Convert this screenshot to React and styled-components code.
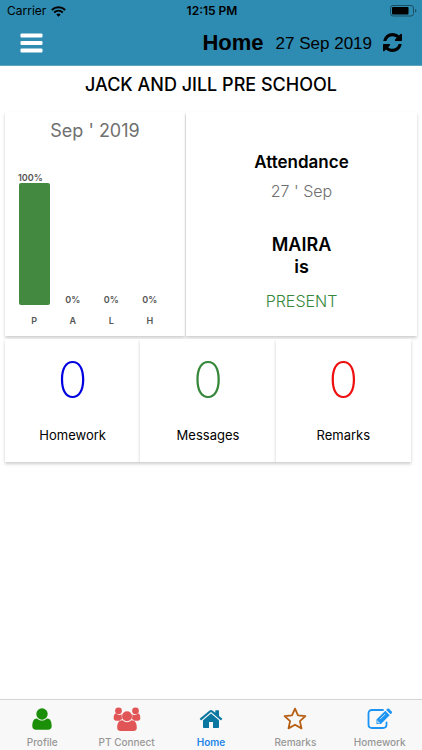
import React from "react";
import styled, { createGlobalStyle } from "styled-components";

const GlobalStyle = createGlobalStyle`
  * {
    box-sizing: border-box;
  }

  body {
    margin: 0;
    background: #fff;
    color: #000;
    font-family: Inter, "Liberation Sans", sans-serif;
  }

  button {
    margin: 0;
    padding: 0;
    border: 0;
    background: none;
    color: inherit;
    font: inherit;
    cursor: pointer;
  }
`;

const Page = styled.div`
  display: flex;
  flex-direction: column;
  min-height: 100vh;
`;

const Header = styled.header`
  background: #2e8bb1;
  border-bottom: 1px solid #5fa5c2;
`;

const StatusBar = styled.div`
  display: grid;
  grid-template-columns: 1fr auto 1fr;
  align-items: center;
  height: 22px;
  padding: 0 5px 0 7px;
  font-size: 12px;
  line-height: 22px;
`;

const Carrier = styled.span`
  display: flex;
  align-items: center;
  gap: 5px;
`;

const Time = styled.span`
  font-weight: 600;
`;

const Battery = styled.svg`
  justify-self: end;
`;

const Toolbar = styled.div`
  display: flex;
  align-items: center;
  height: 43px;
  padding: 0 20px 2px;
  font-family: "Liberation Sans", Arial, sans-serif;
`;

const IconButton = styled.button`
  display: flex;
  margin-left: ${(props) => (props.$end ? "11px" : "0")};
`;

const Title = styled.h1`
  margin: 0 0 0 auto;
  font-size: 22px;
  line-height: 40px;
`;

const Today = styled.span`
  margin-left: 12px;
  padding-top: 2px;
  font-size: 17px;
  line-height: 40px;
`;

const School = styled.h2`
  margin: 0;
  padding: 8px 0 16px;
  font-size: 18px;
  font-weight: 500;
  line-height: 22px;
  text-align: center;
`;

const Content = styled.main`
  flex: 1;
  padding: 0 5px;
`;

const Row = styled.div`
  display: grid;
  grid-template-columns: ${(props) => props.$columns};
  gap: ${(props) => props.$gap || "0"};
  margin: 0 ${(props) => props.$inset || "0"} 3px 0;
`;

const Card = styled.section`
  display: flex;
  flex-direction: column;
  align-items: center;
  background: #fff;
  box-shadow: 0 2px 3px rgba(0, 0, 0, 0.2);
`;

const ChartCard = styled(Card)`
  padding: 7px 16px 10px 10px;
`;

const Month = styled.h3`
  margin: 0 0 30px 6px;
  color: #707070;
  font-size: 18px;
  font-weight: 400;
  line-height: 24px;
`;

const Chart = styled.div`
  display: grid;
  grid-template-columns: repeat(4, 1fr);
  width: 100%;
  color: #555;
  font-size: 9px;
  font-weight: 600;
  line-height: 10px;
`;

const Column = styled.div`
  display: flex;
  flex-direction: column;
  align-items: center;
  justify-content: flex-end;
  height: 153px;
`;

const Percent = styled.span`
  align-self: ${(props) => (props.$wide ? "flex-start" : "center")};
  padding-left: ${(props) => (props.$wide ? "3px" : "0")};
`;

const Bar = styled.div`
  width: 31px;
  border-radius: 2px;
  background: #43893f;
`;

const Letter = styled.span`
  margin-top: 11px;
`;

const StatusCard = styled(Card)`
  padding-top: 39px;
`;

const Line = styled.p`
  margin: 0;
  color: ${(props) => props.$color || "#000"};
  font-size: ${(props) => props.$size || "16px"};
  font-weight: ${(props) => props.$weight || 600};
  line-height: 22px;
`;

const Spacer = styled.div`
  height: ${(props) => props.$height};
`;

const CountCard = styled(Card)`
  padding: 16px 0 17px;
`;

const Count = styled.strong`
  color: ${(props) => props.$color};
  font-size: 50px;
  font-weight: 200;
  line-height: 50px;
`;

const CountLabel = styled.span`
  margin-top: 20px;
  font-size: 13px;
  line-height: 20px;
`;

const Tabs = styled.nav`
  display: grid;
  grid-template-columns: repeat(5, 1fr);
  height: 51px;
  border-top: 1px solid #d4d4d4;
  background: #f8f8f8;
`;

const Tab = styled.button`
  && {
    display: flex;
    flex-direction: column;
    align-items: center;
    padding-top: 7px;
    color: ${(props) => (props.$active ? "#2385e8" : "#979797")};
    font-size: 10px;
    font-weight: ${(props) => (props.$active ? 600 : 500)};
    line-height: 14px;
  }
`;

const TabIcon = styled.svg`
  height: 24px;
  margin-bottom: 4px;
  fill: currentColor;
  color: ${(props) => props.$color};
`;

const bars = [
  { letter: "P", value: 100 },
  { letter: "A", value: 0 },
  { letter: "L", value: 0 },
  { letter: "H", value: 0 },
];

const counts = [
  { label: "Homework", value: 0, color: "#0000e0" },
  { label: "Messages", value: 0, color: "#36873a" },
  { label: "Remarks", value: 0, color: "#ee1010" },
];

const tabs = [
  {
    label: "Profile",
    color: "#1c8f08",
    width: 24,
    icon: (
      <>
        <circle cx="12" cy="7" r="5.7" />
        <path d="M7 11.5C3.5 11.5 2.3 15 2.3 19.2C2.3 21.5 3.8 22.7 6 22.7H18C20.2 22.7 21.7 21.5 21.7 19.2C21.7 15 20.5 11.5 17 11.5C15.8 12.7 14 13.6 12 13.6C10 13.6 8.2 12.7 7 11.5Z" />
      </>
    ),
  },
  {
    label: "PT Connect",
    color: "#e25557",
    width: 28,
    icon: (
      <>
        <circle cx="5.5" cy="3.8" r="3.4" />
        <circle cx="22.5" cy="3.8" r="3.4" />
        <path d="M3 6.4C1 6.4.7 9 .7 11.2C.7 12.8 1.7 13.7 3.2 13.7H6.7C7.5 12.7 8.5 12.2 9.5 12.1C8.6 10.8 8.4 9.1 8.9 7.5C6.6 8.5 4.4 7.7 3 6.4Z" />
        <path d="M25 6.4C27 6.4 27.3 9 27.3 11.2C27.3 12.8 26.3 13.7 24.8 13.7H21.3C20.5 12.7 19.5 12.2 18.5 12.1C19.4 10.8 19.6 9.1 19.1 7.5C21.4 8.5 23.6 7.7 25 6.4Z" />
        <circle cx="14" cy="9.2" r="5" />
        <path d="M9.6 13.2C5.5 13.2 4.2 16.5 4.2 20.8C4.2 23 5.6 24 7.6 24H20.4C22.4 24 23.8 23 23.8 20.8C23.8 16.5 22.5 13.2 18.4 13.2C15.8 15.8 12.2 15.8 9.6 13.2Z" />
      </>
    ),
  },
  {
    label: "Home",
    color: "#0b77a0",
    width: 24,
    active: true,
    icon: (
      <>
        <path d="M12 6.6L20 13.2V20.2C20 20.7 19.7 21 19.2 21H14V15H10V21H4.8C4.3 21 4 20.7 4 20.2V13.2Z" />
        <path d="M10.6 3.4C11.4 2.7 12.6 2.7 13.4 3.4L16.3 5.8V3.7C16.3 3.4 16.5 3.2 16.8 3.2H19.5C19.8 3.2 20 3.4 20 3.7V8.9L23.1 11.5C23.3 11.7 23.3 12 23.1 12.2L22.3 13.1C22.1 13.3 21.9 13.3 21.7 13.2L12 5.1L2.3 13.2C2.1 13.3 1.9 13.3 1.7 13.1L.9 12.2C.7 12 .7 11.7.9 11.5Z" />
      </>
    ),
  },
  {
    label: "Remarks",
    color: "#b65e12",
    width: 24,
    icon: (
      <path
        d="M12 1.6L15 8.4L22.4 9.2L16.9 14.1L18.5 21.4L12 17.7L5.5 21.4L7.1 14.1L1.6 9.2L9 8.4Z"
        fill="none"
        stroke="currentColor"
        strokeWidth="1.8"
        strokeLinejoin="round"
      />
    ),
  },
  {
    label: "Homework",
    color: "#1b94f4",
    width: 26,
    icon: (
      <>
        <path
          d="M16 3H5Q1.5 3 1.5 6.5V17.5Q1.5 21 5 21H16Q19.5 21 19.5 17.5V15.5"
          fill="none"
          stroke="currentColor"
          strokeWidth="1.8"
          strokeLinecap="round"
        />
        <path d="M9.5 12.6L18.3 3.8L22.7 8.2L13.9 17H9.5Z" />
        <path d="M19.2 2.9L20.3 1.8Q21.2 1.1 22.1 1.8L24.7 4.4Q25.4 5.3 24.7 6.2L23.6 7.3Z" />
        <path d="M13 12.2L18.2 7M10.8 13.6V15.8H13" fill="none" stroke="#f8f8f8" strokeWidth="0.8" />
      </>
    ),
  },
];

export default function App() {
  return (
    <Page>
      <GlobalStyle />
      <Header>
        <StatusBar>
          <Carrier>
            Carrier
            <svg width="15" height="11" viewBox="0 0 15 11" fill="none" stroke="#000" strokeWidth="1.9">
              <path d="M.8 4C4.5.3 10.5.3 14.2 4M3.2 6.5C5.7 4.2 9.3 4.2 11.8 6.5" />
              <path d="M5.3 8.4Q7.5 6.7 9.7 8.4L7.5 10.7Z" fill="#000" stroke="none" />
            </svg>
          </Carrier>
          <Time>12:15 PM</Time>
          <Battery width="27" height="12" viewBox="0 0 27 12">
            <rect x=".5" y=".5" width="23" height="10.5" rx="2.5" fill="none" stroke="#1a4f65" />
            <rect x="2" y="2" width="16.5" height="7.5" rx="1" />
            <path d="M25 4Q26.5 4.5 26.5 5.8T25 7.6Z" fill="#1a4f65" />
          </Battery>
        </StatusBar>
        <Toolbar>
          <IconButton aria-label="Menu">
            <svg width="23" height="20" viewBox="0 0 23 20" fill="#fff">
              <rect x="0.5" y="0.5" width="22" height="4" rx="1" />
              <rect x="0.5" y="8" width="22" height="4" rx="1" />
              <rect x="0.5" y="15.5" width="22" height="4" rx="1" />
            </svg>
          </IconButton>
          <Title>Home</Title>
          <Today>27 Sep 2019</Today>
          <IconButton $end aria-label="Refresh">
            <svg width="19" height="19" viewBox="0 0 1536 1536">
              <path d="M1511 928q0 5-1 7-64 268-268 434.500T764 1536q-146 0-282.500-55T238 1324l-129 129q-19 19-45 19t-45-19-19-45V960q0-26 19-45t45-19h448q26 0 45 19t19 45-19 45l-137 137q71 66 161 102t187 36q134 0 250-65t186-179q11-17 53-117 8-23 30-23h192q13 0 22.500 9.500t9.500 22.500zM1536 128v448q0 26-19 45t-45 19h-448q-26 0-45-19t-19-45 19-45l138-138Q969 256 768 256q-134 0-250 65T332 500q-11 17-53 117-8 23-30 23H50q-13 0-22.500-9.500T18 608v-7q65-268 270-434.500T768 0q146 0 284 55.500T1297 212l130-129q19-19 45-19t45 19 19 45z" />
            </svg>
          </IconButton>
        </Toolbar>
      </Header>

      <Content>
        <School>JACK AND JILL PRE SCHOOL</School>
        <Row $columns="180fr 231fr" $gap="1px">
          <ChartCard>
            <Month>Sep ' 2019</Month>
            <Chart>
              {bars.map((bar) => (
                <Column key={bar.letter}>
                  <Percent $wide={bar.value === 100}>{bar.value}%</Percent>
                  <Bar style={{ height: `${bar.value * 1.22}px` }} />
                  <Letter>{bar.letter}</Letter>
                </Column>
              ))}
            </Chart>
          </ChartCard>
          <StatusCard>
            <Line $size="17px">Attendance</Line>
            <Spacer $height="7px" />
            <Line $color="#707070" $weight={300}>27 ' Sep</Line>
            <Spacer $height="32px" />
            <Line $size="18px">MAIRA</Line>
            <Line $size="18px">is</Line>
            <Spacer $height="12px" />
            <Line $color="#36873a" $weight={300}>PRESENT</Line>
          </StatusCard>
        </Row>
        <Row $columns="repeat(3, 1fr)" $inset="6px">
          {counts.map((item) => (
            <CountCard key={item.label}>
              <Count $color={item.color}>{item.value}</Count>
              <CountLabel>{item.label}</CountLabel>
            </CountCard>
          ))}
        </Row>
      </Content>

      <Tabs>
        {tabs.map((tab) => (
          <Tab key={tab.label} $active={tab.active}>
            <TabIcon width={tab.width} viewBox={`0 0 ${tab.width} 24`} $color={tab.color}>
              {tab.icon}
            </TabIcon>
            {tab.label}
          </Tab>
        ))}
      </Tabs>
    </Page>
  );
}
